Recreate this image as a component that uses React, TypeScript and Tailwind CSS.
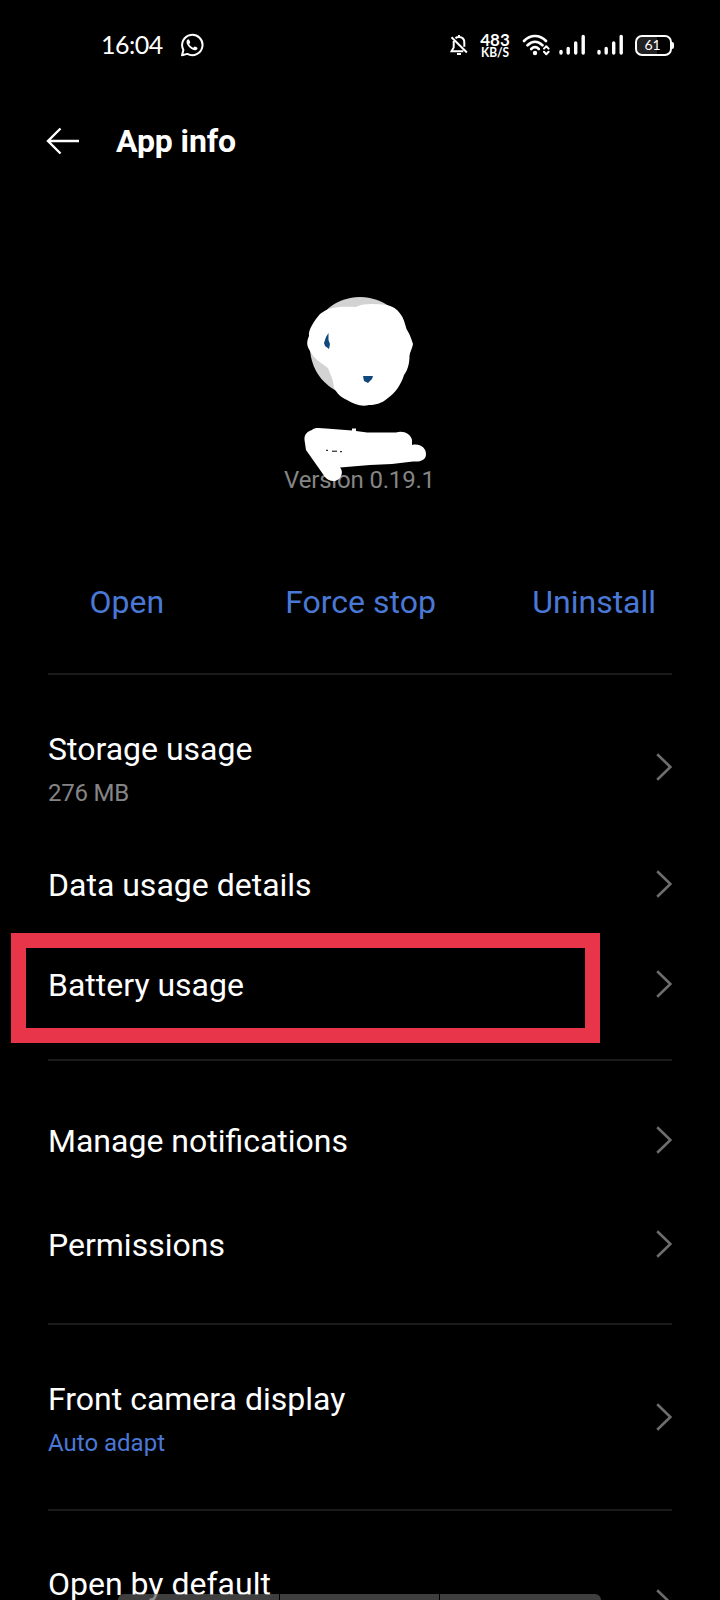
import React from "react";

function Chevron() {
  return (
    <svg width="18" height="30" viewBox="0 0 18 30" fill="none" stroke="#6d6d6d" strokeWidth="2.6" className="shrink-0">
      <path d="M3.2 2.2 L16.4 15 L3.2 27.8" />
    </svg>
  );
}

function Divider() {
  return <div className="h-0.5 shrink-0 bg-[#1b1b1b]" />;
}

type RowProps = { title: string; sub?: string; subClass?: string; className: string };

function Row({ title, sub, subClass = "", className }: RowProps) {
  return (
    <div className={`flex shrink-0 items-center justify-between ${className}`}>
      <div className={`flex flex-col gap-[11px] ${sub ? "pt-1" : "pt-0.5"}`}>
        <span className="text-[32px] leading-[38px]">{title}</span>
        {sub && <span className={`text-2xl leading-7 ${subClass}`}>{sub}</span>}
      </div>
      <Chevron />
    </div>
  );
}

function Signal() {
  return (
    <svg width="27" height="22" viewBox="0 0 27 22" stroke="white" strokeWidth="3.4" strokeLinecap="round">
      <path d="M2 17.5V19M9.2 14.5V19M16.7 9V19M24.2 2.5V19" />
    </svg>
  );
}

function StatusBar() {
  return (
    <div className="flex h-[90px] shrink-0 items-center pl-[101px] pr-[46px]">
      <span className="w-[62px] whitespace-nowrap font-['Lato'] text-[25px] tracking-[-0.5px]">16:04</span>
      <svg className="ml-[17px]" width="24" height="24" viewBox="0 0 24 24" fill="none">
        <path d="M2 22.2 L3.4 16.9 A10.2 10.2 0 1 1 7.4 20.9 Z" stroke="white" strokeWidth="2" strokeLinejoin="round" />
        <path
          d="M8.4 6.3c-.5-.1-1.9.9-1.9 2.7 0 2 1.7 4.3 3.3 5.8 1.7 1.5 4 2.7 5.5 2.5 1.2-.2 2.2-1.2 2.3-2.3 0-.5-2.4-1.7-2.9-1.6-.5.1-1.1 1.3-1.6 1.3-.8-.1-3.7-2.5-3.8-3.5 0-.5.9-1.1.9-1.6 0-.5-1-3.1-1.8-3.3Z"
          fill="white"
        />
      </svg>
      <div className="ml-auto flex items-center">
        <svg width="18" height="22" viewBox="0 0 18 22" fill="none" stroke="white" strokeWidth="2">
          <path d="M5.5 4.2C6.3 3.4 7.5 3 9 3c3.3 0 5.3 2.3 5.3 5.5v4.3M3.7 7v6.5L1.5 17.3h11.8M9 3V1M1.5 3.2l15.4 15.3" />
          <path d="M7 20h4" />
        </svg>
        <div className="ml-3 flex w-[30px] flex-col items-center whitespace-nowrap font-['Lato'] font-bold">
          <span className="text-[17px] leading-[15px]">483</span>
          <span className="scale-y-110 text-[12px] leading-[12px] tracking-[-0.1px]">KB/S</span>
        </div>
        <svg className="ml-3" width="28" height="22" viewBox="0 0 28 22" fill="none" stroke="white" strokeLinecap="round">
          <path d="M2 7C8.5.3 17.5.3 24 7M5.5 11.2c4.6-4.6 10.4-4.6 15 0M9.2 15c2.5-2.4 5.1-2.4 7.6 0" strokeWidth="2.7" />
          <circle cx="13" cy="19" r="2.2" fill="white" stroke="none" />
          <path d="M22 14.6l2.3-2.4 2.3 2.4M22 17.8l2.3 2.4 2.3-2.4" strokeWidth="2" strokeLinejoin="round" />
        </svg>
        <div className="ml-[9px] flex gap-[11px]">
          <Signal />
          <Signal />
        </div>
        <div className="ml-[11px] flex items-center">
          <div className="flex h-[21px] w-[37px] items-center justify-center rounded-[7px] border-2 border-white bg-gradient-to-r from-[#222] from-60% to-black to-60% pr-0.5 font-['Lato'] text-[14px] leading-none">
            61
          </div>
          <div className="h-[7px] w-[2px] rounded-r bg-white" />
        </div>
      </div>
    </div>
  );
}

function AppHeader() {
  return (
    <div className="flex flex-col items-center">
      <svg width="180" height="186" viewBox="0 0 180 186">
        <circle cx="90" cy="67" r="50" fill="#d3d3d3" />
        <path
          fill="white"
          d="M50 34C58 27 72 26 86 27C94 23 106 24 117 25C128 27 135 38 136 49C140 54 141 58 143 64C142 70 139 73 139.500 78C139 86 137 91 134 95C131 105 125 113 118 118C111 124 105 125 99 125C91 127 84 124 77 120C70 117 67 113 64 108C63 98 60 94 58 88C50 82 44 79 40 71C36 65 37 61 39 56C38 50 44 41 50 34Z"
        />
        <path fill="#11487c" d="M58.500 53L56 57L54 63L55 66L59 69L60 64L58.500 60ZM93 96H103L102 99L98 103L94 101Z" />
      </svg>
      <div className="relative flex w-[180px] justify-center whitespace-nowrap pr-px text-2xl leading-7 tracking-[-0.18px] text-[#858585]">
        Version 0.19.1
        <svg className="absolute left-0 top-[-46px]" width="180" height="66" viewBox="0 140 180 66">
          <path
            fill="white"
            d="M34.500 160C34 154 38 151 42 150C44 147.500 49 148 56 148.500L82 150.500V148.500H86V151L97 152.500H126C133 150 141 154 142 160V165C150 163 156 168 156 174C156 180 151 182 143 181.500L122 184L100 185L70 187.500C73 191 72 195 70 198C66 202.500 59 202 55 197L36 170Z"
          />
          <path d="M56 170.300h2M62 171.200h5M70 171.700h2" stroke="black" strokeWidth="1" />
        </svg>
      </div>
    </div>
  );
}

export default function App() {
  return (
    <div className="relative flex h-[1600px] w-[720px] flex-col overflow-hidden bg-black font-['Roboto',sans-serif] text-white">
      <StatusBar />
      <div className="flex h-[102px] shrink-0 items-center pl-[46px]">
        <svg width="34" height="28" viewBox="0 0 34 28" fill="none" stroke="white" strokeWidth="2.4">
          <path d="M33 14H2M14.5 1.5L2 14L14.5 26.5" />
        </svg>
        <span className="ml-9 text-[32px] font-bold leading-[38px] tracking-[-0.1px]">App info</span>
      </div>
      <div className="h-[88px] shrink-0" />
      <AppHeader />
      <div className="mt-[89px] grid shrink-0 grid-cols-3 pl-[10px] pr-[9px] text-center text-[32px] leading-[38px] text-[#4a78d6]">
        <span>Open</span>
        <span>Force stop</span>
        <span>Uninstall</span>
      </div>
      <div className="mt-[52px] flex flex-col px-12">
        <Divider />
        <Row className="mt-6 h-[135px]" title="Storage usage" sub="276 MB" subClass="text-[#858585] tracking-[-0.2px]" />
        <Row className="h-[100px]" title="Data usage details" />
        <Row className="mb-[25px] h-[100px]" title="Battery usage" />
        <Divider />
        <Row className="mt-[27px] h-[104px]" title="Manage notifications" />
        <Row className="mb-[27px] h-[104px]" title="Permissions" />
        <Divider />
        <Row className="mt-6 mb-[25px] h-[135px]" title="Front camera display" sub="Auto adapt" subClass="text-[#4a78d6]" />
        <Divider />
        <div className="mt-[54px] flex h-[52px] shrink-0 items-start justify-between">
          <span className="text-[32px] leading-[38px]">Open by default</span>
          <div className="pt-[23px]">
            <Chevron />
          </div>
        </div>
      </div>
      <div className="absolute left-[11px] top-[933px] h-[110px] w-[589px] border-[15px] border-[#e93549]" />
      <div className="absolute left-[118px] top-[1594px] flex h-3 w-[483px] gap-px overflow-hidden rounded-md">
        <div className="w-[161px] bg-[#5a5a5a]/70" />
        <div className="w-[159px] bg-[#5a5a5a]/70" />
        <div className="flex-1 bg-[#5a5a5a]/70" />
      </div>
    </div>
  );
}
